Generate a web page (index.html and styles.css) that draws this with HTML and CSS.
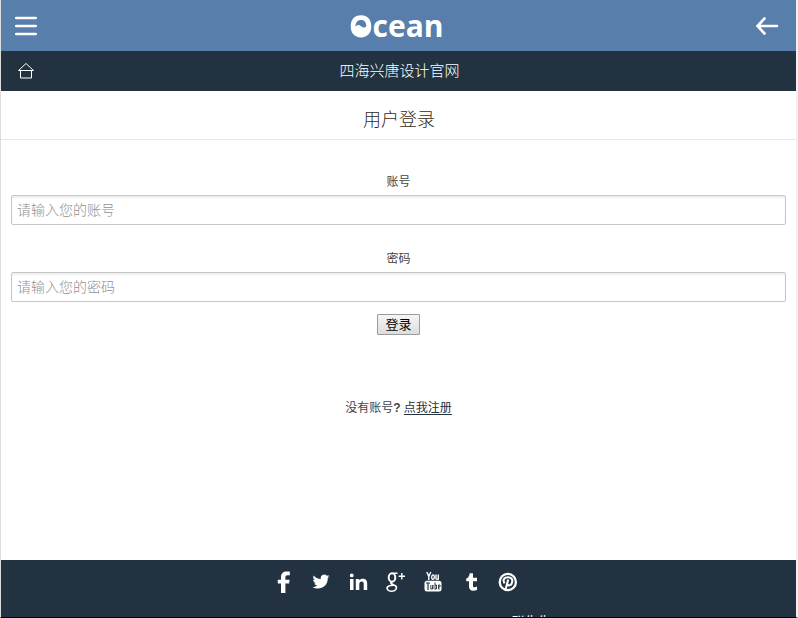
FILE: index.html
```html
<!DOCTYPE html>
<html lang="zh-CN">
<head>
<meta charset="utf-8">
<title>用户登录</title>
<link rel="stylesheet" href="styles.css">
</head>
<body>
<div class="page">
  <header class="topbar">
    <svg class="menu" width="24" height="22" viewBox="0 0 24 22"><path d="M2.300 3h19.400M2.300 11h19.400M2.300 19h19.400" stroke="#fff" stroke-width="2.700" stroke-linecap="round"/></svg>
    <div class="logo">
      <svg width="22" height="23" viewBox="0 0 22 23"><path fill="#fff" fill-rule="evenodd" d="M11 .2C17.600.2 21.300 4.600 21.300 11.300S17.600 22.400 11 22.400.7 18 .7 11.300 4.400.2 11 .2ZM5.500 11.700C7.300 9.500 9.300 9.700 11 11.200c2 1.700 3.900 1.700 5.300-.3C16.200 7 14.200 4.900 11 4.900c-3.500 0-5.600 2.500-5.500 6.800Z"/></svg>
      <span>cean</span>
    </div>
    <svg class="back" width="24" height="20" viewBox="0 0 24 20"><path d="M9.500 2.500 2.500 10l7 7.500M3 10h19" fill="none" stroke="#fff" stroke-width="2.600" stroke-linecap="round"/></svg>
  </header>
  <nav class="subbar">
    <svg class="home" width="18" height="18" viewBox="0 0 18 18"><path d="M1.500 8.500 9 1.500l7.500 7ZM3.500 9v7h11V9" fill="none" stroke="#fff"/></svg>
    <span>四海兴唐设计官网</span>
  </nav>
  <main class="content">
    <h1>用户登录</h1>
    <form class="login">
      <label for="user">账号</label>
      <input id="user" type="text" placeholder="请输入您的账号">
      <label for="pass">密码</label>
      <input id="pass" type="password" placeholder="请输入您的密码">
      <button type="button">登录</button>
    </form>
    <p class="register">没有账号<b>?</b> <a href="#">点我注册</a></p>
  </main>
  <footer class="footer">
    <div class="social">
      <svg viewBox="0 0 24 24"><path fill="#fff" d="M9 23V13.600H5.800V9.700H9V7.100C9 3.200 11.200 1.400 14.500 1.400h3.300v3.900h-2.300c-1.600 0-2.100.7-2.100 2.100v2.300h4.200l-.5 3.900h-3.700V23Z"/></svg>
      <svg viewBox="0 0 24 24"><path fill="#fff" d="M20.500 6.300c-.7.300-1.300.5-2 .6.700-.4 1.200-1.100 1.500-1.900-.7.400-1.400.7-2.200.8a3.500 3.500 0 0 0-6 3.200C9 8.900 6.400 7.500 4.700 5.400c-.9 1.600-.5 3.600 1.100 4.700-.6 0-1.100-.2-1.600-.4 0 1.700 1.200 3.100 2.800 3.400-.5.200-1 .2-1.600.1.400 1.400 1.700 2.400 3.300 2.400A7 7 0 0 1 3.600 17c5.800 3.600 15.300.9 15.200-8.900.7-.5 1.300-1.100 1.700-1.800Z"/></svg>
      <svg viewBox="0 0 24 24"><path fill="#fff" d="M3 9h3.500v11H3ZM4.750 3.500a1.900 1.900 0 1 1 0 3.800 1.900 1.900 0 0 1 0-3.800ZM8.800 9h3.400v1.500C13 9.300 14.100 8.700 15.900 8.700c3.400 0 4.300 2.200 4.300 5.200V20h-3.500v-5.500c0-1.500-.1-2.900-1.900-2.900s-2.500 1.300-2.500 2.900V20H8.800Z"/></svg>
      <svg viewBox="0 0 24 24"><g fill="none" stroke="#fff"><ellipse cx="8" cy="7.500" rx="3.300" ry="4.200" stroke-width="2"/><path d="M9 3.200h4.500M8 11.700c-3.500 2 1.800 2.400 3.600 4.200 2 2.100.1 5.400-4 5.400-4.500 0-5.800-3.700-3-5.200 1.500-.8 3.200-.8 5-.8" stroke-width="1.600"/><path d="M17.800 3v6.500M14.600 6.250H21" stroke-width="1.400"/></g></svg>
      <svg viewBox="0 0 24 24"><path d="m5.800 2 2 4.400V10m2-8-2 4.400" fill="none" stroke="#fff" stroke-width="1.400"/><ellipse cx="12" cy="7.100" rx="1.300" ry="2.300" fill="none" stroke="#fff" stroke-width="1.300"/><path d="M15 4.500v4.300q1.500 1.200 2.300-.2V4.500v5.300" fill="none" stroke="#fff" stroke-width="1.400"/><rect x="3.500" y="10.800" width="17" height="10.700" rx="2.500" fill="#fff"/><path d="M5 13h4M7 13v7" fill="none" stroke="#233240" stroke-width="1.200"/><path d="M9.800 15v4h2v-4v4M14 12.500V19.500M14 15h1.500v4H14M18.800 19h-1.300v-4h1.500v2h-1.500" fill="none" stroke="#233240" stroke-width=".9"/></svg>
      <svg viewBox="0 0 24 24"><path fill="#fff" d="M14 3.200v4.500h4v3.500h-4v4.500c0 1.700 1.500 1.900 4 .9v3.500c-4.500 1.600-8 .6-8-3.500v-5.400H7.200V8.500c2-.6 3.200-2.300 3.500-5.300Z"/></svg>
      <svg viewBox="0 0 24 24"><circle cx="11.800" cy="12" r="8.100" fill="none" stroke="#fff" stroke-width="2.300"/><path d="M8.600 13.300C6.100 9.800 8.500 7.200 12 7.200c3.200 0 4.700 2 4.200 4.600-.5 3.300-3.300 4.600-4.700 2.500M12.200 9.500 9.700 19" fill="none" stroke="#fff" stroke-width="2.100"/></svg>
    </div>
    <div class="credit">联先生</div>
  </footer>
</div>
</body>
</html>
```
FILE: styles.css
```css
* { box-sizing: border-box; }
body {
  margin: 0;
  height: 618px;
  overflow: hidden;
  background: #fff;
  font: 12px/18px "Liberation Sans", "Noto Sans CJK SC", sans-serif;
  color: #444;
}
.page {
  height: 618px;
  display: flex;
  flex-direction: column;
  border-left: 1px solid #ddd;
  border-right: 2px solid #f0f0f0;
  border-bottom: 1px solid #000;
}
.topbar {
  flex: none;
  height: 51px;
  padding: 0 17px 0 13px;
  display: flex;
  align-items: center;
  justify-content: space-between;
  background: #587eab;
}
.menu { margin-top: 1px; }
.logo {
  display: flex;
  align-items: center;
  gap: 1px;
  margin-right: 0;
  color: #fff;
}
.logo svg { margin-top: 2px; }
.logo span { font: bold 30px/50px "Open Sans", sans-serif; }
.back { margin-top: 1px; }
.subbar {
  flex: none;
  height: 40px;
  padding: 0 16px;
  display: grid;
  grid-template-columns: 18px 1fr 18px;
  align-items: center;
  text-align: center;
  background: #233240;
  color: #fff;
  font-size: 15px;
  font-weight: 300;
}
.subbar span { padding-left: 2px; }
.content {
  flex: 1;
  text-align: center;
}
h1 {
  margin: 0;
  height: 49px;
  padding: 5px 0 0 1px;
  border-bottom: 1px solid #e9e9e9;
  font-size: 18px;
  line-height: 48px;
  font-weight: 300;
  color: #332c1c;
}
.login {
  display: flex;
  flex-direction: column;
  align-items: center;
  padding: 33px 10px 0;
}
.login label { height: 22px; }
.login input {
  width: 100%;
  height: 30px;
  margin: 0 0 25px;
  padding: 0 5px;
  border: 1px solid #c6c6c6;
  border-radius: 2px;
  box-shadow: inset 0 2px 2px #eee;
  font: 300 14px "Liberation Sans", "Noto Sans CJK SC", sans-serif;
}
.login input::placeholder { color: #909090; opacity: 1; }
.login button {
  width: 43px;
  height: 21px;
  margin-top: -13px;
  padding: 0;
  border: 1px solid #9b9b9b;
  border-radius: 1px;
  background: linear-gradient(#f5f5f5, #ddd);
  font: 13px/17px "Liberation Sans", "Noto Sans CJK SC", sans-serif;
  color: #000;
}
.register { margin: 64px 0 0; }
.register a { color: #233240; text-underline-offset: 2px; }
.footer {
  flex: none;
  height: 57px;
  overflow: hidden;
  background: #233240;
  color: #fff;
}
.social {
  display: flex;
  justify-content: center;
  gap: 13.300px;
  padding: 9.500px 5px 0 0;
}
.social svg { width: 24px; height: 24px; }
.credit { margin-top: 19.500px; padding-left: 511px; font-size: 13px; }
```
